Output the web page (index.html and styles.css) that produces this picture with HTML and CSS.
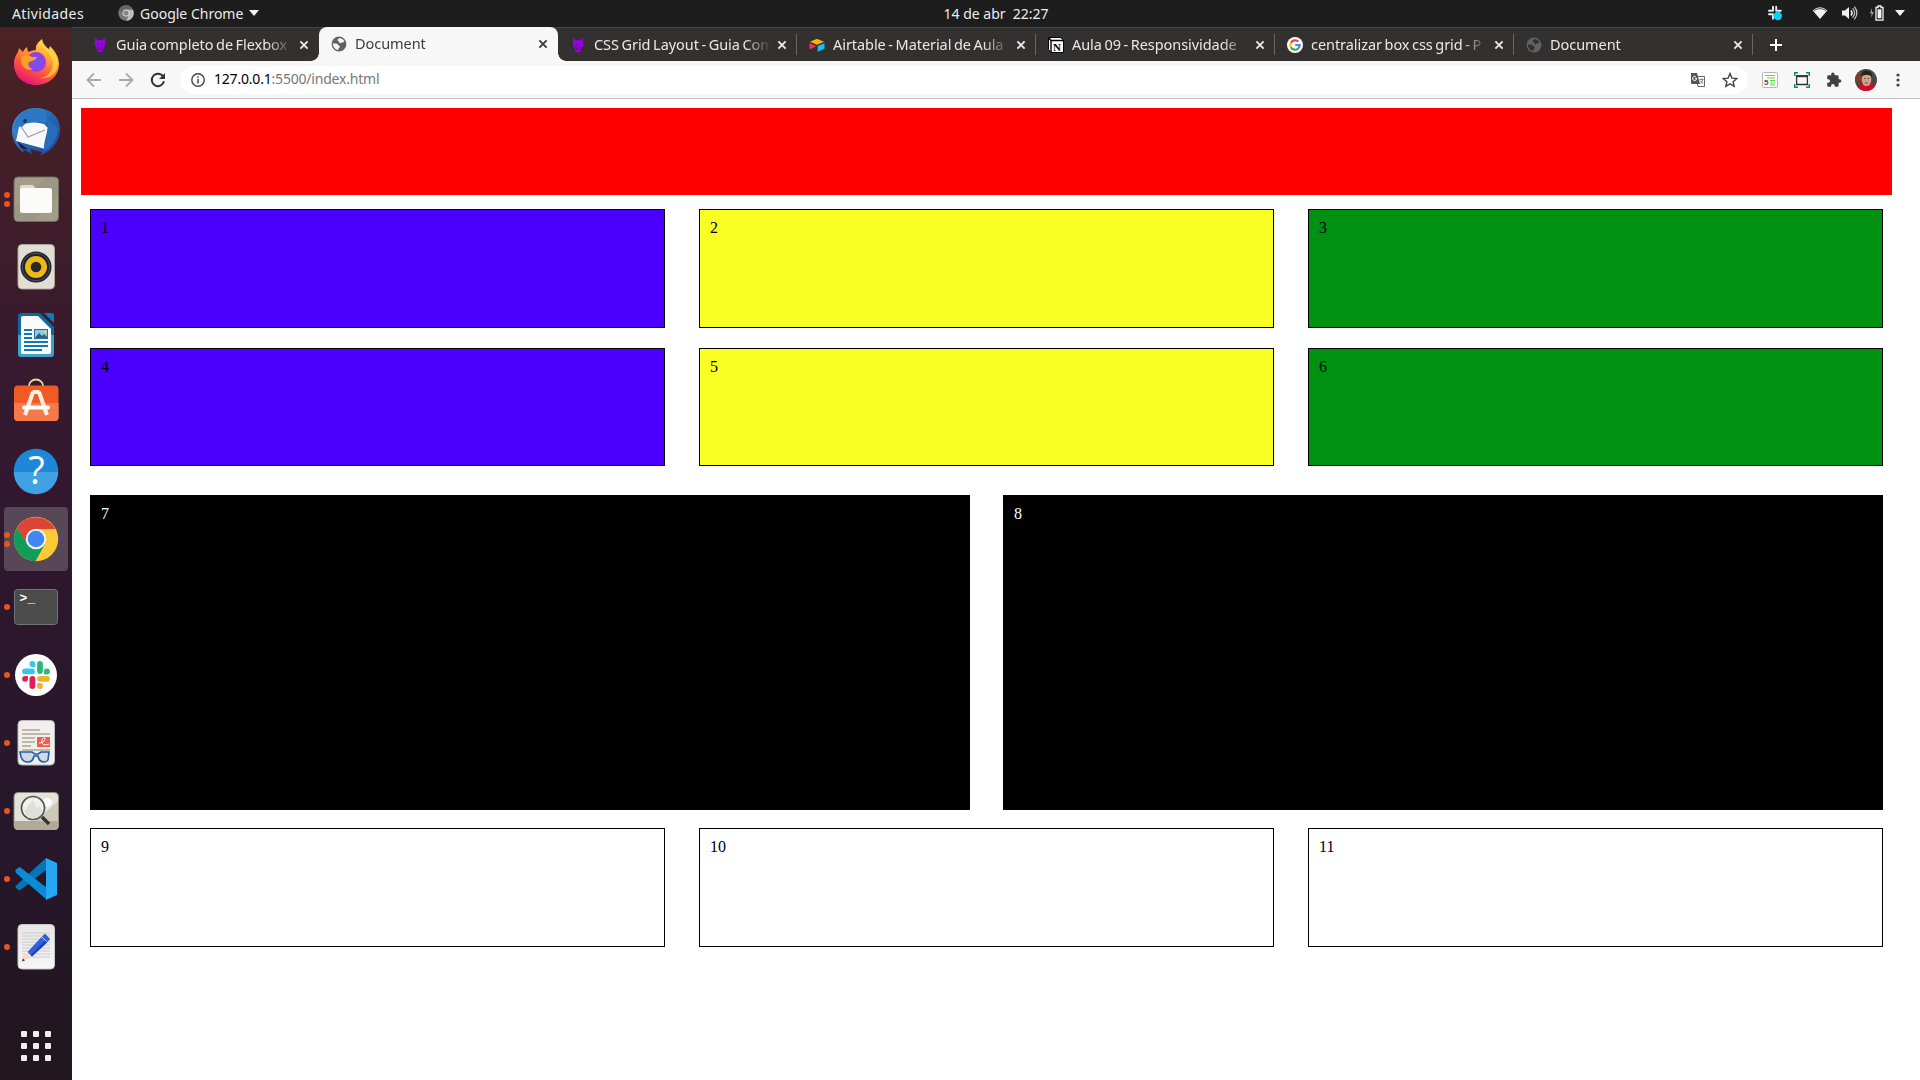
FILE: index.html
```html
<!DOCTYPE html>
<html lang="pt-BR">
<head>
<meta charset="utf-8">
<title>Document</title>
<link rel="stylesheet" href="styles.css">
</head>
<body>
<svg class="defs" width="0" height="0">
  <defs>
    <linearGradient id="ff" x1=".8" y1="0" x2=".3" y2="1"><stop offset="0" stop-color="#fff44f"/><stop offset=".35" stop-color="#ffa436"/><stop offset=".65" stop-color="#ff5a3c"/><stop offset="1" stop-color="#e5107a"/></linearGradient>
    <radialGradient id="ffp"><stop offset="0" stop-color="#6a5af0"/><stop offset="1" stop-color="#9a3be0"/></radialGradient>
    <linearGradient id="tb" x1="0" y1="0" x2="1" y2="1"><stop offset="0" stop-color="#4a9be0"/><stop offset=".5" stop-color="#2368b5"/><stop offset="1" stop-color="#2a3f92"/></linearGradient>
    <linearGradient id="paper" x1="0" y1="0" x2="0" y2="1"><stop offset="0" stop-color="#e6e6e6"/><stop offset="1" stop-color="#f6f6f6"/></linearGradient>
  </defs>
  <symbol id="globe" viewBox="0 0 16 16"><circle cx="8" cy="8" r="7.4" fill="currentColor"/><path class="land" d="M1.800 7.400h3.400q1.600.2 1.900 1.500 2 .2 1.700 2.300-1.500.5-1.600 2.900-4.900-.8-5.400-6.700zM6.400 4.200q.2-1.400 2.200-2.200 3.200.4 4.800 3-.9 1.800-2.700 1.500-.9 1.200-2.400.2.200-1.200-1.900-2.500z"/></symbol>
  <symbol id="wolf" viewBox="0 0 16 20"><path d="M1.800 1 5 4h6l3.200-3 .3 9.500-2 3-1.500 4.500-3 1.500-3-1.500-1.500-4.500-2-3z" fill="#9b00ec"/><path d="M4.300 8.500 7 10M11.700 8.500 9 10M5.500 12l.8 4M10.500 12l-.8 4M7 15.500h2" stroke="#36203f" stroke-width="1.100" fill="none"/></symbol>
  <symbol id="close" viewBox="0 0 10 10"><path d="m1.400 1.400 7.200 7.200M8.600 1.400 1.400 8.600" stroke="currentColor" stroke-width="1.900"/></symbol>
</svg>

<header class="topbar">
  <span class="activities">Atividades</span>
  <div class="appmenu">
    <svg width="16" height="16" viewBox="0 0 16 16"><circle cx="8" cy="8" r="7.700" fill="#777"/><path d="M8 8V4.500h6.900A7.700 7.700 0 0 1 8.300 15.700L11 9.700z" fill="#bcbcbc"/><path d="M1.300 4.200A7.700 7.700 0 0 1 14.900 4.500H8L5 9.500z" fill="#666"/><circle cx="8" cy="8" r="3.500" fill="#ddd"/><circle cx="8" cy="8" r="2.600" fill="#858585"/></svg>
    <span class="appname">Google Chrome</span>
    <svg width="10" height="6" viewBox="0 0 10 6"><path d="M0 0h10L5 6z" fill="#f2f2f2"/></svg>
  </div>
  <span class="clock">14 de abr&nbsp; 22:27</span>
  <div class="status">
    <svg class="s-slack" width="16" height="16" viewBox="0 0 16 16"><path d="M6 1.800v4M9.200 1.800v4M2 5.800h2.500M10.800 5.800h3M2 9.200h4M6 10.800v3" stroke="#ededed" stroke-width="1.900" stroke-linecap="round"/><circle cx="10.800" cy="11" r="4.200" fill="#08d1f7"/></svg>
    <svg class="s-wifi" width="16" height="14" viewBox="0 0 16 14"><path d="M.7 4.400Q8-2 15.300 4.400L8 13z" fill="#f2f2f2"/><path d="M2 4.700Q8 .4 14 4.700" stroke="#555" fill="none"/></svg>
    <svg class="s-vol" width="17" height="16" viewBox="0 0 17 16"><path d="M1 5.500h3L8 2v12l-4-3.500H1z" fill="#f2f2f2"/><path d="M10 5.500q2 2.500 0 5" stroke="#f2f2f2" stroke-width="1.500" fill="none"/><path d="M11.600 3.400q4 4.600 0 9.200M13.400 1.700q5 6.300 0 12.600" stroke="#ccc" stroke-width="1.200" fill="none"/></svg>
    <svg class="s-bat" width="15" height="16" viewBox="0 0 15 16"><path d="M3 3 .8 8.500h2L1.700 13 5 7H3z" fill="#999"/><path d="M7 2.500h2V1h3v1.500h2v12.700H7z" fill="none" stroke="#f2f2f2" stroke-width="1.300"/><path d="M8.600 4.300h3.800v9H8.600z" fill="#f2f2f2"/></svg>
    <svg width="10" height="6" viewBox="0 0 10 6"><path d="M0 0h10L5 6z" fill="#f2f2f2"/></svg>
  </div>
</header>

<div class="desktop">
<nav class="dock">
  <div class="app"><svg viewBox="0 0 48 48"><path d="M24 46C11 46 2 37 2 25c0-6 2-9 4-12l1-4 4 4c1-2 2-4 4-5l1 5c3-1 5-2 8-2-1-4 2-8 6-11 1 5 3 7 7 10l1-3c5 5 9 11 9 18 0 12-10 21-23 21z" fill="url(#ff)"/><path d="M29 3c0 7 12 10 12 22 0 8-7 14-14 14 14 2 20-8 19-18-2-7-6-8-8-9-4-3-8-5-9-9z" fill="#ffe23c" opacity=".65"/><circle cx="24" cy="23" r="10" fill="url(#ffp)"/><path d="M9 18c4-3 8-2 11 0h5c-1 3-5 4-8 5-2 3 1 6 4 8-9 1-13-6-12-13z" fill="#ff9f25"/></svg></div>
  <div class="app"><svg viewBox="0 0 48 48"><path d="M24 1C9 1 0 12 0 24c0 9 5 17 12 22l-1-4 9 5-2-5 12 3-2 3c9-2 19-11 20-24C49 10 38 1 24 1z" fill="url(#tb)"/><path d="M7 20l5-3q10-3 20 0l4 4-3 21-29-8z" fill="#f8f8fa"/><path d="m8 18 8 12 17-7" fill="none" stroke="#9a9da5" stroke-width="1.200"/><path d="M2 22C3 8 14-1 25 2c8 1 12 7 9 14-8-3-14-1-20 0l-4 4-3-1z" fill="#2b79c4"/><path d="m5 34 12 9-8-2z" fill="#251640"/><path d="M35 12c3 12-4 20-3 32 7-3 14-13 14-23z" fill="#286cbc"/><circle cx="13" cy="14" r="1.900" fill="#263240"/></svg></div>
  <div class="app"><i class="pip two"></i><svg viewBox="0 0 48 48"><rect x="2" y="2" width="44.500" height="44.500" rx="4" fill="#a29c88" stroke="#716c60"/><path d="M3 32 34 3h10q2 0 2 2v16L20 46H5q-2 0-2-2z" fill="#969180" opacity=".5"/><path d="M8 15v-3q0-2 2-2h11l3 4v8H8z" fill="#dedbd0"/><rect x="8" y="13" width="32" height="25" rx="2.500" fill="#fbfbfa"/></svg></div>
  <div class="app"><svg viewBox="0 0 48 48"><rect x="6" y="1.500" width="36.500" height="44.500" rx="4" fill="#e2ded3" stroke="#aaa59a"/><circle cx="24" cy="24" r="15.500" fill="#20242d"/><circle cx="24" cy="24" r="13.800" fill="none" stroke="#4d525c"/><circle cx="24" cy="24" r="11" fill="#edb916"/><circle cx="24" cy="24" r="5.300" fill="#292b2a"/></svg></div>
  <div class="app"><svg viewBox="0 0 48 48"><path d="M9 2h19l14 14v27q0 3-3 3H9q-3 0-3-3V5q0-3 3-3z" fill="#0e689d"/><path d="M6 24h36v19q0 3-3 3H9q-3 0-3-3z" fill="#409fcb"/><path d="M11 5h15l13 13v23q0 2-2 2H11q-2 0-2-2V7q0-2 2-2z" fill="#fbfbfb"/><path d="M32 2h8q2 0 2 2v8z" fill="#0b7cb5"/><path d="M12 19h8M12 23h8M12 27h8M12 31h24M12 35h24M12 39h18" stroke="#1377b4" stroke-width="1.800"/><rect x="22.500" y="18.500" width="13" height="9" fill="#88caeb" stroke="#1377b4"/><path d="m23 27 4-5 3 3 2-2 4 4z" fill="#415969"/><circle cx="33" cy="21" r="1.500" fill="#f1d04a"/></svg></div>
  <div class="app"><svg viewBox="0 0 48 48"><path d="M17 9V7a7 6.500 0 0 1 14 0v2" fill="none" stroke="#f4d3a0" stroke-width="1.800"/><rect x="2" y="6.500" width="44.500" height="35.500" rx="4" fill="#f15a23"/><path d="M2 24h44.500v14q0 4-4 4H6q-4 0-4-4z" fill="#f47a4b"/><path d="M21 13 13 36M27 13l8 23M20.500 13h7" stroke="#fff0e6" stroke-width="4"/><path d="M12 28.500h24" stroke="#fff" stroke-width="4" stroke-linecap="round"/></svg></div>
  <div class="app"><svg viewBox="0 0 48 48"><circle cx="24" cy="24" r="22.200" fill="#1d87d8"/><path d="M1.800 25a22.200 22.200 0 0 0 44.400 0z" fill="#40a2e3"/><text class="glyph-help" x="24.500" y="37" text-anchor="middle">?</text></svg></div>
  <div class="app current"><i class="pip two"></i><svg viewBox="0 0 48 48"><circle cx="24" cy="24" r="22.200" fill="#fbc936"/><path d="M24 24 33 29 23.500 46.200A22.200 22.200 0 0 1 5 12.700L16 30z" fill="#109d58"/><path d="M5 12.700A22.200 22.200 0 0 1 43.500 14H24L15 29z" fill="#db4437"/><circle cx="24" cy="24" r="10.300" fill="#f4f4f4"/><circle cx="24" cy="24" r="8.300" fill="#4285f4"/></svg></div>
  <div class="app"><i class="pip"></i><svg viewBox="0 0 48 48"><rect x="2.500" y="6.500" width="43" height="35" rx="3" fill="#4b4b4b" stroke="#747474"/><text class="glyph-term" x="7.500" y="19">&gt;_</text></svg></div>
  <div class="app"><i class="pip"></i><svg viewBox="0 0 48 48"><circle cx="24" cy="24" r="21" fill="#fff"/><g stroke-width="5.800" stroke-linecap="round"><path d="M13 20.400h7M20.400 13v.1" stroke="#36c5f0"/><path d="M28 13v7M35 20.400h-.1" stroke="#2eb67d"/><path d="M28 27.800h7M28 35.100v-.1" stroke="#ecb22e"/><path d="M20.400 27.800V35M13 27.800h.1" stroke="#e01e5a"/></g><path d="M20.400 13h2.900v2.900h-2.900z" fill="#36c5f0"/><path d="M32 20.400h3v2.900h-3z" fill="#2eb67d"/><path d="M25.100 32.200H28v2.900h-2.900z" fill="#ecb22e"/><path d="M13 24.900h2.900v2.900H13z" fill="#e01e5a"/></svg></div>
  <div class="app"><i class="pip"></i><svg viewBox="0 0 48 48"><rect x="6" y="1.500" width="36.500" height="44.500" rx="4" fill="#f0efee" stroke="#bbb"/><path d="M10 11h18M10 15h28M10 19h13M10 23h13M10 27h9M10 31h28" stroke="#bdb8aa" stroke-width="1.800"/><path d="M25 18h13v10H25z" fill="#f15c4c"/><path d="M27 24c5 0 8-5 5-5s-3 7 1 7l4-1" fill="none" stroke="#fff"/><path d="M8 33h12l3 2h3l3-2h8l-1 8q-1 2-4 2-5 0-6-6h-4q-1 6-6 6t-7-5z" fill="#cfdae5" stroke="#2260a6" stroke-width="1.600"/></svg></div>
  <div class="app"><i class="pip"></i><svg viewBox="0 0 48 48"><rect x="2" y="5.500" width="44.500" height="37" rx="4" fill="#e4e3da" stroke="#8e897a"/><path d="M2 34h44.500v5q0 4-4 4H6q-4 0-4-4z" fill="#b2aa96"/><circle cx="35.500" cy="15.500" r="4.500" fill="#fafaf8"/><path d="M24 34 46 14v20z" fill="#ccc9ba"/><circle cx="21" cy="21" r="11.500" fill="#f0f1ed" stroke="#555" stroke-width="1.700"/><path d="m12 24 9-11 4 8 3-2 3 6-6 6h-9z" fill="#dedfd9"/><path d="m30 30 7 7" stroke="#333" stroke-width="3.400"/></svg></div>
  <div class="app"><i class="pip"></i><svg viewBox="0 0 48 48"><path d="M3.500 31 34 3v12L8.500 35q-1 .5-2 0l-3-2.500z" fill="#0873b6"/><path d="M3.500 17v-2l3-2.500q1-.5 2 0L35 33v12L4 18z" fill="#0b8bd5"/><path d="M34 3l11 5v32l-11 5z" fill="#25a7f1"/></svg></div>
  <div class="app"><i class="pip"></i><svg viewBox="0 0 48 48"><rect x="6" y="1.500" width="36.500" height="44.500" rx="4" fill="url(#paper)" stroke="#c8c8c8"/><path d="M10 10h28M10 13h28M10 16h28M10 19h28M10 22h28M10 25h28M10 28h28M10 31h28M10 34h28" stroke="#ccc"/><path d="m10 38.500 3-9 5 5z" fill="#fdd9b5"/><path d="m10 38.500 1-3 2 2z" fill="#333"/><path d="m15.500 29 14-15 5.500 5.500-15 14z" fill="#2f62e2"/><path d="m18.500 32 15-14.500 1.500 2-15 14z" fill="#2143a8"/><path d="m30 13.500 3-3 5 5.500-2.500 3z" fill="#315fd0"/></svg></div>
  <div class="showapps"><i></i><i></i><i></i><i></i><i></i><i></i><i></i><i></i><i></i></div>
</nav>

<section class="browser">
  <div class="tabs">
    <div class="tab"><svg class="fav"><use href="#wolf"/></svg><span class="title">Guia completo de Flexbox</span><svg class="x"><use href="#close"/></svg></div>
    <div class="tab active"><svg class="fav globe-a"><use href="#globe"/></svg><span class="title">Document</span><svg class="x"><use href="#close"/></svg></div>
    <div class="tab sep"><svg class="fav"><use href="#wolf"/></svg><span class="title">CSS Grid Layout - Guia Com</span><svg class="x"><use href="#close"/></svg></div>
    <div class="tab sep"><svg class="fav" viewBox="0 0 16 16"><path d="m1 4.800 6.500-2.900h1L15 4.800 8 7.700z" fill="#fcb400"/><path d="M8.700 9 15.500 6.200v5.600l-6.800 3z" fill="#18bfff"/><path d="M.5 6 7.300 9.200.5 12.500z" fill="#f82b60"/></svg><span class="title">Airtable - Material de Aula</span><svg class="x"><use href="#close"/></svg></div>
    <div class="tab sep"><svg class="fav" viewBox="0 0 16 16"><path d="M.5.500h12l3 2.500v12.500H3L.5 12.500z" fill="#fff" stroke="#000"/><path d="M.5.500 3 3.500h12.500M3 3.500v12" fill="none" stroke="#000" stroke-width="1.400"/><text class="glyph-n" x="5" y="13.500">N</text></svg><span class="title">Aula 09 - Responsividade</span><svg class="x"><use href="#close"/></svg></div>
    <div class="tab sep"><svg class="fav" viewBox="0 0 16 16"><circle cx="8" cy="8" r="8" fill="#fff"/><g fill="none" stroke-width="2.200"><path d="M11.300 4.600A4.700 4.700 0 0 0 3.900 5.700" stroke="#ea4335"/><path d="M3.900 5.700a4.700 4.700 0 0 0 0 4.600" stroke="#fbbc05"/><path d="M3.900 10.300a4.700 4.700 0 0 0 7.200 1.300" stroke="#34a853"/><path d="M11.100 11.600A4.700 4.700 0 0 0 12.700 8H8.200" stroke="#4285f4"/></g></svg><span class="title">centralizar box css grid - P</span><svg class="x"><use href="#close"/></svg></div>
    <div class="tab sep"><svg class="fav globe-b"><use href="#globe"/></svg><span class="title">Document</span><svg class="x"><use href="#close"/></svg></div>
    <div class="newtab"><svg width="14" height="14" viewBox="0 0 14 14"><path d="M7 1v12M1 7h12" stroke="#fff" stroke-width="2"/></svg></div>
  </div>

  <div class="toolbar">
    <div class="navs">
      <svg viewBox="0 0 16 16"><path d="M15 8H2M8 1.500 1.500 8 8 14.500" fill="none" stroke="#aaa" stroke-width="1.800"/></svg>
      <svg viewBox="0 0 16 16"><path d="M1 8h13M8 1.500 14.500 8 8 14.500" fill="none" stroke="#aaa" stroke-width="1.800"/></svg>
      <svg viewBox="0 0 16 16"><path d="M13.300 4.800A6.200 6.200 0 1 0 14 9.300" fill="none" stroke="#333" stroke-width="2"/><path d="M15 1v6H9z" fill="#333"/></svg>
    </div>
    <div class="omnibox">
      <svg class="info" viewBox="0 0 14 14"><circle cx="7" cy="7" r="6.200" fill="none" stroke="#444" stroke-width="1.400"/><path d="M7 6v4.500M7 3.200v1.600" stroke="#444" stroke-width="1.500"/></svg>
      <span class="url"><b>127.0.0.1</b>:5500/index.html</span>
      <svg class="translate" viewBox="0 0 14 14"><path d="M5 3.500h8.500v10H7z" fill="#fff" stroke="#666"/><path d="M0 0h6l3 11H1q-1 0-1-1z" fill="#555"/><path d="M6 5.500H4.300M5.600 5.500A2 2 0 1 1 5 4" fill="none" stroke="#fff"/><path d="M8.500 6.500h4M10.500 5.500v1M11.800 6.500q-.5 2.500-2.500 4M9.300 7.500q1 2 3 3" stroke="#666" stroke-width=".8" fill="none"/></svg>
      <svg class="star" viewBox="0 0 16 16"><path d="m8 1.600 1.900 4.500 4.900.4L11.100 9.700l1.100 4.700L8 11.900l-4.200 2.500 1.100-4.700L1.200 6.500l4.900-.4z" fill="none" stroke="#444" stroke-width="1.400"/></svg>
    </div>
    <div class="exts">
      <svg viewBox="0 0 16 16"><rect x=".5" y=".5" width="15" height="15" rx="1" fill="#fff" stroke="#b5b5b5"/><path d="M3 3.500h10M5 6h8M8 8.500h5M8 11h5M8 13h5" stroke="#66d43d" stroke-width="1.200"/><text class="glyph-5" x="2" y="13">5</text></svg>
      <svg viewBox="0 0 16 16"><path d="M.7 4V.7H4M12 .7h3.300V4M15.300 12v3.300H12M4 15.300H.7V12" fill="none" stroke="#0c9444" stroke-width="1.500"/><path d="M2.600 4h10.800v8.500H2.600z" fill="none" stroke="#333" stroke-width="1.300"/><path d="M2 4.200h12" stroke="#333" stroke-width="2"/></svg>
      <svg viewBox="0 0 16 16"><path d="M13.600 7.300h-1V4.600q0-1.300-1.300-1.300H8.600v-1a1.700 1.700 0 0 0-3.400 0v1H2.500q-1.300 0-1.300 1.300v2.600h1a1.800 1.800 0 0 1 0 3.600h-1v2.600q0 1.300 1.300 1.300h2.600v-1a1.800 1.800 0 0 1 3.600 0v1h2.600q1.300 0 1.300-1.300v-2.700h1a1.700 1.700 0 0 0 0-3.400z" fill="#414141"/></svg>
      <svg class="avatar" viewBox="0 0 22 22"><clipPath id="av"><circle cx="11" cy="11" r="11"/></clipPath><g clip-path="url(#av)"><path d="M0 0h22v22H0z" fill="#464b3f"/><path d="M0 3h6v10H0z" fill="#7a3e2e"/><path d="M0 22c0-6 5-8 11-8s11 2 11 8z" fill="#c8102c"/><ellipse cx="11.500" cy="10.500" rx="4.800" ry="6.600" fill="#d3a090"/><path d="M6 7.500q0-6 5.500-6T17 7.500q-5-3.500-11 0z" fill="#252322"/><path d="M9 9.500h1.500M12.500 9.500H14M10 14h3" stroke="#70443c"/></g></svg>
      <svg class="dots" viewBox="0 0 4 14"><circle cx="2" cy="2" r="1.600" fill="#444"/><circle cx="2" cy="7" r="1.600" fill="#444"/><circle cx="2" cy="12" r="1.600" fill="#444"/></svg>
    </div>
  </div>

  <main class="page">
    <div class="banner"></div>
    <div class="grid">
      <div class="box blue">1</div><div class="box yellow">2</div><div class="box green">3</div>
      <div class="box blue">4</div><div class="box yellow">5</div><div class="box green">6</div>
    </div>
    <div class="grid halves"><div class="box black">7</div><div class="box black">8</div></div>
    <div class="grid last"><div class="box">9</div><div class="box">10</div><div class="box">11</div></div>
  </main>
</section>
</div>
</body>
</html>
```

FILE: styles.css
```css
* { box-sizing: border-box; }
body { margin: 0; width: 1920px; height: 1080px; overflow: hidden; display: flex; flex-direction: column; background: #fff; font: 14.5px "Noto Sans", "Open Sans", sans-serif; }
svg { display: block; flex: none; }
.defs { position: absolute; }

.topbar { height: 27px; background: #1d1d1d; color: #ececec; display: grid; grid-template-columns: 1fr auto 1fr; grid-template-rows: 26px; align-items: center; font-size: 14px; white-space: nowrap; }
.activities { grid-column: 1; grid-row: 1; padding-left: 12px; letter-spacing: .4px; }
.appmenu { grid-column: 1; grid-row: 1; display: flex; align-items: center; padding-left: 118px; }
.appname { width: 104px; margin: 0 5px 0 6px; }
.clock { grid-column: 2; grid-row: 1; width: 106px; margin-left: 73px; }
.status { grid-column: 3; grid-row: 1; display: flex; align-items: center; justify-content: flex-end; padding-right: 15px; }
.s-slack { margin-right: 29px; }
.s-wifi { margin-right: 13px; }
.s-vol { margin-right: 13px; }
.s-bat { margin-right: 11px; margin-left: -2px; }

.desktop { flex: 1; display: flex; min-height: 0; }
.dock { width: 72px; flex: none; padding-top: 2px; background: linear-gradient(#4b2225, #3f1d2a 18%, #34192f 38%, #2d172d 56%, #26172a 78%, #21161d); display: flex; flex-direction: column; align-items: center; }
.app { position: relative; width: 64px; height: 64px; margin: 2px 0; border-radius: 4px; display: flex; align-items: center; justify-content: center; }
.app svg { width: 48px; height: 48px; overflow: visible; }
.app.current { background: #584757; }
.pip { position: absolute; left: 0; top: 29px; width: 6px; height: 6px; border-radius: 50%; background: #e95420; }
.pip.two { top: 25px; box-shadow: 0 9px #e95420; }
.glyph-help { font: 38px "Open Sans", sans-serif; fill: #fff; }
.glyph-term { font: bold 13px "Liberation Mono", monospace; fill: #fff; }
.glyph-n { font: bold 11px "Liberation Serif", serif; fill: #000; }
.glyph-5 { font: bold 8px "Liberation Sans", sans-serif; fill: #555; }
.showapps { margin: auto 0 19px; display: grid; grid-template-columns: repeat(3, 6px); gap: 6px; }
.showapps i { height: 6px; border-radius: 1px; background: #f0eeeb; }

.browser { flex: 1; min-width: 0; display: flex; flex-direction: column; }
.tabs { height: 34px; flex: none; padding-left: 8px; background: #333130; border-top: 1px solid #474543; display: flex; }
.tab { position: relative; width: 239px; height: 33px; padding: 0 10px 0 12px; color: #e9e9e9; display: flex; align-items: center; }
.tab.active { height: 34px; margin-top: -1px; background: #f7f7f7; color: #3c3c3c; border-radius: 8px 8px 0 0; z-index: 1; }
.tab.active::before, .tab.active::after { content: ""; position: absolute; bottom: 0; width: 8px; height: 8px; }
.tab.active::before { left: -8px; background: radial-gradient(circle at 0 0, transparent 7.5px, #f7f7f7 8px); }
.tab.active::after { right: -8px; background: radial-gradient(circle at 100% 0, transparent 7.5px, #f7f7f7 8px); }
.tab.sep { background: linear-gradient(#686664, #686664) no-repeat right 6px / 1px 21px; }
.fav { width: 16px; height: 16px; margin-right: 8px; }
.globe-a { color: #5f6368; --land: #f7f7f7; }
.globe-b { color: #5f6368; --land: #333130; }
.land { fill: var(--land); }
.title { width: 176px; padding-bottom: 2px; overflow: hidden; white-space: nowrap; letter-spacing: -.06px; word-spacing: -1.1px; -webkit-mask-image: linear-gradient(90deg, #000 150px, transparent 177px); mask-image: linear-gradient(90deg, #000 150px, transparent 177px); }
.x { width: 10px; height: 10px; margin-left: 7px; }
.newtab { display: flex; align-items: center; padding-left: 16px; }

.toolbar { height: 38px; flex: none; background: #f7f7f7; border-bottom: 1px solid #bfbfbf; display: flex; align-items: center; }
.navs { display: flex; gap: 16px; padding-left: 14px; width: 108px; }
.navs svg { width: 16px; height: 16px; }
.omnibox { width: 1568px; height: 28px; border-radius: 14px; background: #fff; display: flex; align-items: center; padding: 0 10px 0 11px; }
.info { width: 14px; height: 14px; }
.url { margin-left: 9px; padding-bottom: 2px; flex: 1; color: #75787b; font-size: 14px; letter-spacing: -.2px; }
.url b { font-weight: 400; color: #000; }
.translate { width: 14px; height: 14px; margin-right: 17px; }
.star { width: 16px; height: 16px; }
.exts { display: flex; align-items: center; gap: 16px; padding-left: 14px; }
.exts svg { width: 16px; height: 16px; }
.exts .avatar { width: 22px; height: 22px; margin: 0 -3px; }
.exts .dots { width: 4px; height: 14px; margin-left: 6px; }

.page { flex: 1; padding: 9px 28px 0 9px; background: #fff; font: 16px/20px "Liberation Serif", serif; color: #000; }
.banner { height: 87px; background: #f00; }
.grid { display: grid; grid-template-columns: repeat(3, 1fr); grid-template-rows: 119px 118px; gap: 20px 34px; margin: 14px 9px 0; }
.halves { grid-template-columns: repeat(2, 1fr); grid-template-rows: 315px; column-gap: 33px; margin-top: 29px; }
.last { grid-template-rows: 119px; margin-top: 18px; }
.box { border: 1px solid #000; padding: 8px 10px; }
.blue { background: #4b00ff; }
.yellow { background: #f9ff24; }
.green { background: #009112; }
.black { background: #000; color: #fff; }
```
